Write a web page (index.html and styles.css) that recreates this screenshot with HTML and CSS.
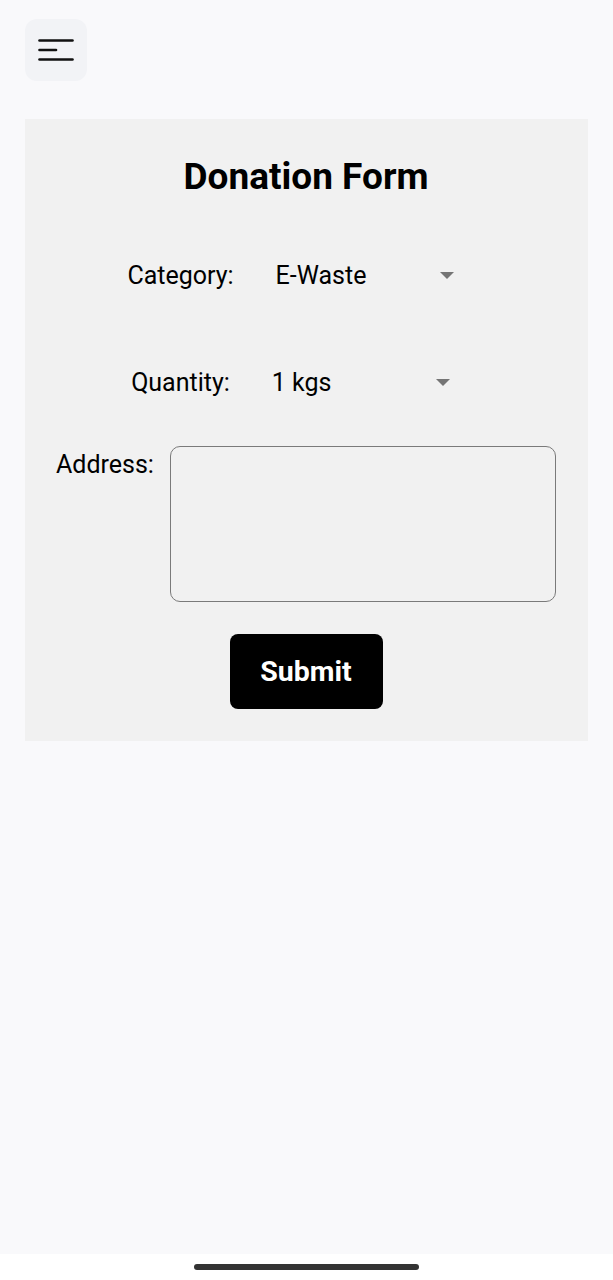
FILE: index.html
```html
<!DOCTYPE html>
<html lang="en">
<head>
    <meta charset="UTF-8">
    <meta name="viewport" content="width=device-width, initial-scale=1.0">
    <title>Donation Form</title>
    <link rel="stylesheet" href="styles.css">
</head>
<body>
    <div class="screen">
        <div class="top-bar">
            <button class="menu-button" aria-label="Menu">
                <svg width="36" height="24" viewBox="0 0 36 24">
                    <line x1="1.5" y1="2.5" x2="34.5" y2="2.5" stroke="#111" stroke-width="2.6" stroke-linecap="round"/>
                    <line x1="1.5" y1="12" x2="18" y2="12" stroke="#111" stroke-width="2.6" stroke-linecap="round"/>
                    <line x1="1.5" y1="21.5" x2="34.5" y2="21.5" stroke="#111" stroke-width="2.6" stroke-linecap="round"/>
                </svg>
            </button>
        </div>

        <div class="card">
            <h1 class="title">Donation Form</h1>

            <div class="field-row">
                <span class="field-label">Category:</span>
                <div class="spinner">
                    <span class="spinner-value">E-Waste</span>
                    <span class="spinner-arrow"></span>
                </div>
            </div>

            <div class="field-row quantity-row">
                <span class="field-label">Quantity:</span>
                <div class="spinner">
                    <span class="spinner-value">1 kgs</span>
                    <span class="spinner-arrow"></span>
                </div>
            </div>

            <div class="address-row">
                <span class="field-label address-label">Address:</span>
                <textarea class="address-input"></textarea>
            </div>

            <button class="submit-button">Submit</button>
        </div>
    </div>

    <div class="nav-bar">
        <div class="home-indicator"></div>
    </div>
</body>
</html>
```

FILE: styles.css
```css
body {
    margin: 0;
    font-family: Roboto, "Noto Sans", sans-serif;
    background-color: #f9f9fb;
    color: #000;
}
.screen {
    height: 1254px;
    padding: 0 25px;
    box-sizing: border-box;
}
.top-bar {
    padding-top: 19px;
    height: 119px;
    box-sizing: border-box;
}
.menu-button {
    width: 62px;
    height: 62px;
    border: none;
    border-radius: 12px;
    background-color: #f2f3f6;
    display: flex;
    align-items: center;
    justify-content: center;
    padding: 0;
}
.card {
    background-color: #f1f1f1;
    padding: 32px 32px 32px 31px;
    display: flex;
    flex-direction: column;
    align-items: center;
}
.title {
    margin: 0;
    font-size: 37px;
    font-weight: bold;
    line-height: 52px;
}
.field-row {
    display: flex;
    align-items: center;
    height: 48px;
    margin-top: 48px;
    font-size: 25px;
}
.quantity-row {
    margin-top: 59px;
}
.spinner {
    display: flex;
    align-items: center;
    width: 209px;
    margin-left: 42px;
}
.spinner-value {
    width: 164px;
}
.spinner-arrow {
    width: 0;
    height: 0;
    border-left: 7.5px solid transparent;
    border-right: 7.5px solid transparent;
    border-top: 7.5px solid #757575;
}
.address-row {
    display: flex;
    align-items: flex-start;
    gap: 16px;
    margin-top: 40px;
    align-self: stretch;
    font-size: 25px;
}
.address-label {
    padding-top: 4px;
    line-height: 30px;
}
.address-input {
    flex: 1;
    height: 156px;
    box-sizing: border-box;
    border: 1.5px solid #7a7a7a;
    border-radius: 10px;
    background-color: #f1f1f1;
    resize: none;
    font-family: inherit;
    font-size: 20px;
}
.submit-button {
    margin-top: 32px;
    width: 153px;
    height: 75px;
    background-color: #000;
    color: #fff;
    border: none;
    border-radius: 8px;
    font-family: inherit;
    font-size: 28.5px;
    font-weight: bold;
}
.nav-bar {
    height: 26px;
    background-color: #fff;
    display: flex;
    justify-content: center;
    padding-top: 10px;
    box-sizing: border-box;
}
.home-indicator {
    width: 225px;
    height: 6px;
    border-radius: 3px;
    background-color: #333;
}
```
